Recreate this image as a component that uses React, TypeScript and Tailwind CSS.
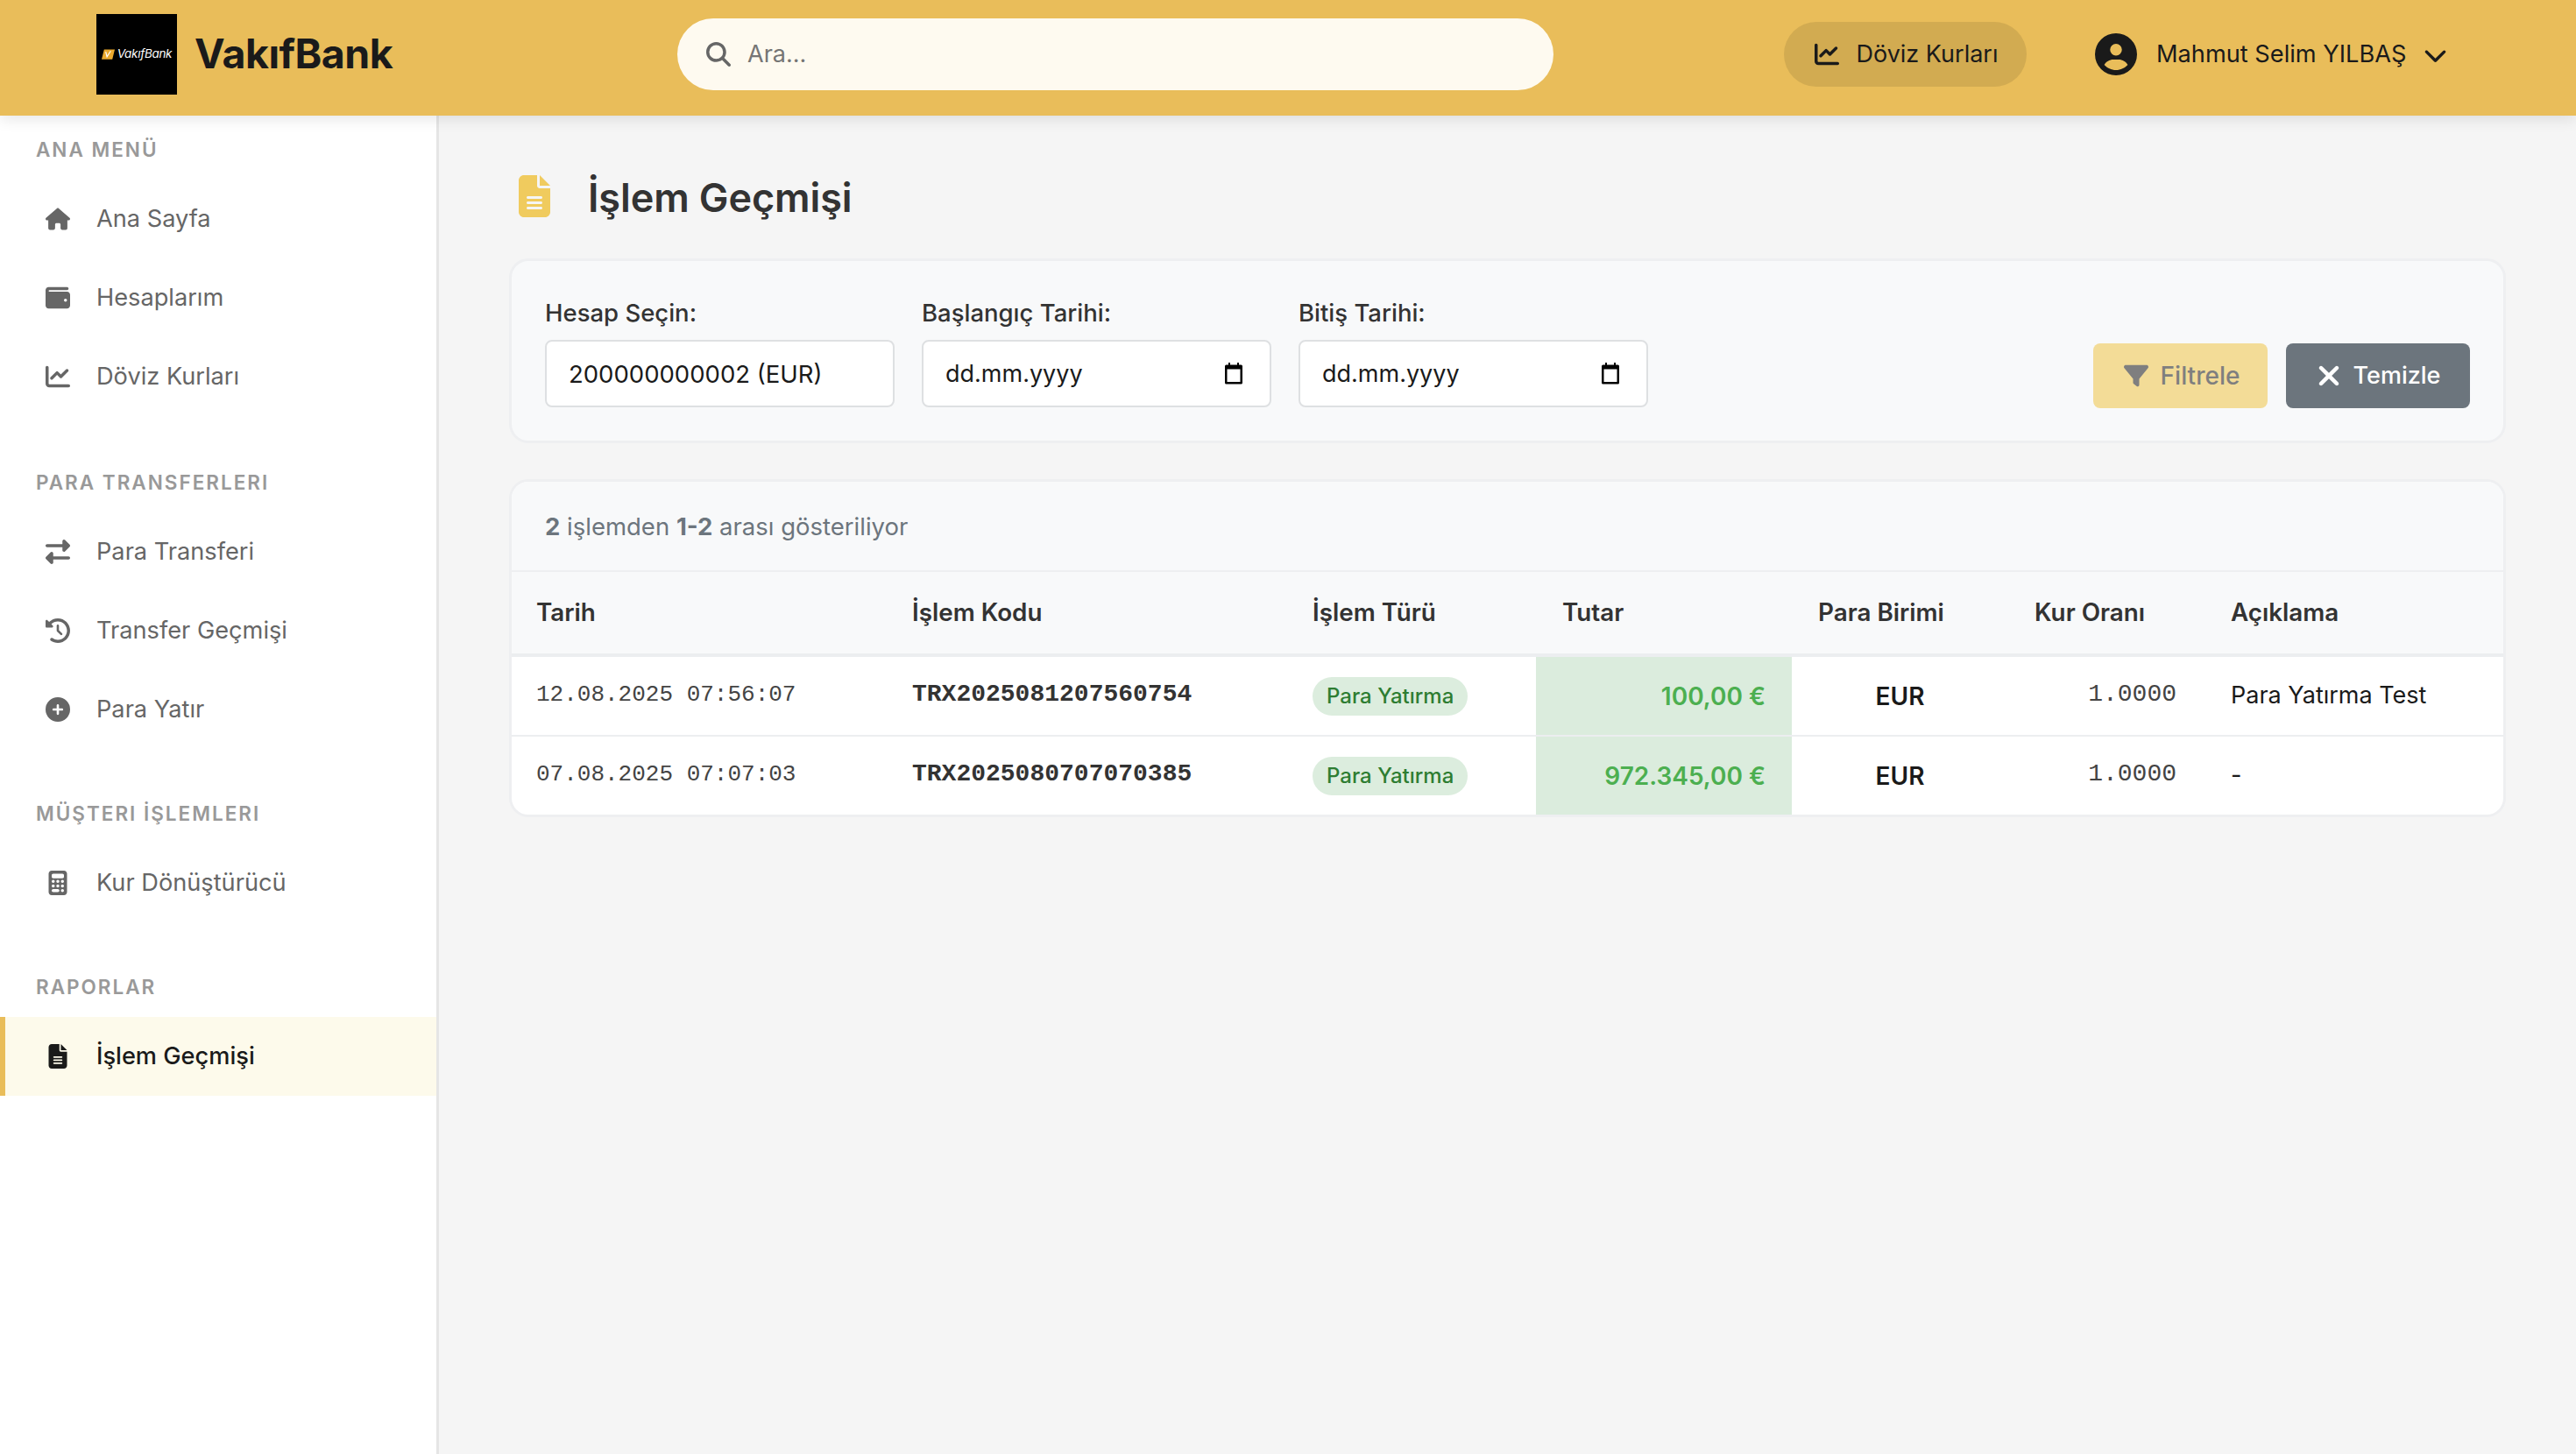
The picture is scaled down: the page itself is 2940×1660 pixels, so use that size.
import type { ReactNode } from 'react'
import {
  FaCalculator,
  FaChartLine,
  FaChevronDown,
  FaCircleUser,
  FaCirclePlus,
  FaClockRotateLeft,
  FaFileLines,
  FaFilter,
  FaHouse,
  FaMagnifyingGlass,
  FaRightLeft,
  FaWallet,
  FaXmark,
} from 'react-icons/fa6'

type MenuItem = { label: string; icon: ReactNode; active?: boolean }
type MenuGroup = { title: string; items: MenuItem[] }

const menu: MenuGroup[] = [
  {
    title: 'ANA MENÜ',
    items: [
      { label: 'Ana Sayfa', icon: <FaHouse /> },
      { label: 'Hesaplarım', icon: <FaWallet /> },
      { label: 'Döviz Kurları', icon: <FaChartLine /> },
    ],
  },
  {
    title: 'PARA TRANSFERLERI',
    items: [
      { label: 'Para Transferi', icon: <FaRightLeft /> },
      { label: 'Transfer Geçmişi', icon: <FaClockRotateLeft /> },
      { label: 'Para Yatır', icon: <FaCirclePlus /> },
    ],
  },
  {
    title: 'MÜŞTERI İŞLEMLERI',
    items: [{ label: 'Kur Dönüştürücü', icon: <FaCalculator /> }],
  },
  {
    title: 'RAPORLAR',
    items: [{ label: 'İşlem Geçmişi', icon: <FaFileLines />, active: true }],
  },
]

const rows = [
  {
    date: '12.08.2025 07:56:07',
    code: 'TRX2025081207560754',
    amount: '100,00 €',
    note: 'Para Yatırma Test',
  },
  {
    date: '07.08.2025 07:07:03',
    code: 'TRX2025080707070385',
    amount: '972.345,00 €',
    note: '-',
  },
]

function CalendarIcon() {
  return (
    <svg viewBox="0 0 22 26" className="h-[26px] w-[22px] shrink-0">
      <path d="M5 0h2v3H5zM15 0h2v3h-2z" fill="#000" />
      <path
        d="M2.5 2.5h17a1.5 1.5 0 0 1 1.5 1.5v19a1.5 1.5 0 0 1-1.5 1.5h-17A1.5 1.5 0 0 1 1 23V4a1.5 1.5 0 0 1 1.5-1.5zM3.500 7.500v14.500h15V7.500z"
        fill="#000"
        fillRule="evenodd"
      />
    </svg>
  )
}

function LogoMark() {
  return (
    <div className="flex h-[92px] w-[92px] shrink-0 items-center justify-center gap-[3px] bg-black">
      <svg viewBox="0 0 16 12" className="h-[12px] w-[15px] shrink-0">
        <path d="M3 0h13l-3 12H0z" fill="#e9a92f" />
        <path d="M5 3l1.500 6L11 2" fill="none" stroke="#fff" strokeWidth="1.300" />
      </svg>
      <span className="text-[13.500px] leading-none tracking-[-0.3px] text-white italic">VakıfBank</span>
    </div>
  )
}

function DateField({ label }: { label: string }) {
  return (
    <div className="w-[399px]">
      <label className="mb-[14px] block text-[27.500px] leading-[34px] font-medium text-[#333333]">{label}</label>
      <div className="flex h-[77px] items-center justify-between rounded-[8px] border-2 border-[#dee0e2] bg-white pr-[30px] pl-[25px] text-[27px] text-[#1a1a1a]">
        <span className="pt-[2px]">dd.mm.yyyy</span>
        <CalendarIcon />
      </div>
    </div>
  )
}

function Sidebar() {
  return (
    <aside className="w-[501px] shrink-0 border-r-[3px] border-[#e5e5e5] bg-white pt-[22px]">
      {menu.map((group) => (
        <div key={group.title} className="mb-[57px] first:mb-[59px]">
          <h3 className="mb-[17px] pl-[41px] text-[22.500px] leading-[34px] font-semibold tracking-[2px] text-[#999999]">
            {group.title}
          </h3>
          {group.items.map((item) => (
            <div
              key={item.label}
              className={
                item.active
                  ? 'flex h-[90px] items-center border-l-[6px] border-[#e9bd5a] bg-[#fdfaeb] pl-[46px] font-medium text-[#1a1a1a]'
                  : 'flex h-[90px] items-center pl-[52px] text-[#666666]'
              }
            >
              <span className="flex w-[28px] justify-center text-[28px]">{item.icon}</span>
              <span className="ml-[30px] text-[27.200px]">{item.label}</span>
            </div>
          ))}
        </div>
      ))}
    </aside>
  )
}

export default function App() {
  return (
    <div className="flex min-h-screen flex-col bg-[#f5f5f5] font-['Inter',sans-serif]">
      <header className="relative z-10 flex h-[132px] shrink-0 items-center bg-[#e9bd5a] pb-[8px] shadow-[0_4px_16px_rgba(0,0,0,0.1)]">
        <div className="flex w-[773px] shrink-0 items-center pl-[110px]">
          <LogoMark />
          <span className="ml-[20px] text-[46.500px] font-bold tracking-[-0.5px] text-[#1a1a1a]">VakıfBank</span>
        </div>
        <div className="flex h-[82px] w-[1000px] items-center rounded-[41px] bg-[#fefaf0] pl-[33px]">
          <FaMagnifyingGlass className="text-[28px] text-[#666666]" />
          <span className="ml-[19px] text-[27px] text-[#757575]">Ara...</span>
        </div>
        <div className="ml-[263px] flex h-[74px] w-[277px] items-center justify-center rounded-[37px] bg-[#d2ab51] text-[#1a1a1a]">
          <FaChartLine className="ml-[2px] text-[28px]" />
          <span className="ml-[20px] text-[27px]">Döviz Kurları</span>
        </div>
        <div className="ml-[78px] flex items-center text-[#1a1a1a]">
          <FaCircleUser className="text-[48px]" />
          <span className="ml-[22px] text-[27.200px]">Mahmut Selim YILBAŞ</span>
          <FaChevronDown className="ml-[20px] text-[27px]" />
        </div>
      </header>

      <div className="flex flex-1">
        <Sidebar />

        <main className="min-w-0 flex-1 pt-[68px] pr-[80px] pl-[80px]">
          <div className="flex h-[48px] items-center">
            <FaFileLines className="ml-[5px] text-[48px] text-[#f0cb5e]" />
            <h1 className="relative top-[2px] ml-[37px] text-[45px] font-semibold tracking-[-0.1px] text-[#333333]">İşlem Geçmişi</h1>
          </div>

          <section className="mt-[47px] flex items-end justify-between rounded-[22px] border-[3px] border-[#eeeff1] bg-[#f8f9fa] pt-[42px] pr-[38px] pb-[37px] pl-[38px]">
            <div className="mb-[1px] flex gap-[31px]">
              <div className="w-[399px]">
                <label className="mb-[14px] block text-[27.500px] leading-[34px] font-medium text-[#333333]">Hesap Seçin:</label>
                <div className="flex h-[77px] items-center rounded-[8px] border-2 border-[#dee0e2] bg-white pl-[25px] text-[27.500px] text-[#1a1a1a]">
                  <span className="pt-[2px]">200000000002 (EUR)</span>
                </div>
              </div>
              <DateField label="Başlangıç Tarihi:" />
              <DateField label="Bitiş Tarihi:" />
            </div>
            <div className="flex gap-[21px]">
              <button
                type="button"
                className="flex h-[74px] w-[199px] items-center justify-center gap-[14px] rounded-[8px] bg-[#f3dc97] pl-[3px] text-[28px] font-medium text-[#7f7f7f]"
              >
                <FaFilter className="text-[28px]" />
                Filtrele
              </button>
              <button
                type="button"
                className="flex h-[74px] w-[210px] items-center justify-center gap-[10px] rounded-[8px] bg-[#6c757d] pr-[3px] text-[27px] font-medium text-white"
              >
                <FaXmark className="text-[36px]" />
                Temizle
              </button>
            </div>
          </section>

          <section className="mt-[41px] overflow-hidden rounded-[22px] border-[3px] border-[#eeeff1] bg-white">
            <div className="flex h-[103px] items-center border-b-2 border-[#eeeff1] bg-[#f8f9fa] pt-[2px] pl-[38px] text-[27.500px] text-[#6c757d]">
              <span>
                <strong className="font-bold">2</strong> işlemden <strong className="font-bold">1-2</strong> arası gösteriliyor
              </span>
            </div>
            <table className="w-full table-fixed border-collapse text-[27px]">
              <thead>
                <tr className="h-[95px] border-b-4 border-[#eceef0] bg-[#f8f9fa] text-left text-[27.800px] text-[#333333]">
                  <th className="w-[427px] pl-[28px] font-semibold">Tarih</th>
                  <th className="w-[457px] pl-[30px] font-semibold">İşlem Kodu</th>
                  <th className="w-[285px] pl-[30px] font-semibold">İşlem Türü</th>
                  <th className="w-[292px] pl-[30px] font-semibold">Tutar</th>
                  <th className="w-[247px] pl-[30px] font-semibold">Para Birimi</th>
                  <th className="w-[224px] pl-[30px] font-semibold">Kur Oranı</th>
                  <th className="pl-[30px] font-semibold">Açıklama</th>
                </tr>
              </thead>
              <tbody>
                {rows.map((row, index) => (
                  <tr key={row.code} className={index === 0 ? 'h-[92px] border-b-2 border-[#eceef0]' : 'h-[90px]'}>
                    <td className="pb-[3px] pl-[28px] font-['Liberation_Mono',monospace] text-[26px] text-[#444444]">{row.date}</td>
                    <td className="pb-[3px] pl-[30px] font-['Liberation_Mono',monospace] text-[28px] font-bold text-[#333333]">{row.code}</td>
                    <td className="pl-[30px]">
                      <span className="inline-flex h-[44px] items-center rounded-[22px] bg-[#dcedde] px-[16px] text-[24px] font-medium text-[#2e7d32]">
                        Para Yatırma
                      </span>
                    </td>
                    <td className="bg-[#dbecdd] pr-[30px] text-right text-[28px] font-semibold text-[#4caf50]">{row.amount}</td>
                    <td className="text-center text-[28px] font-semibold text-[#1a1a1a]">EUR</td>
                    <td className="pr-[32px] pb-[3px] text-right font-['Liberation_Mono',monospace] text-[28px] text-[#444444]">1.0000</td>
                    <td className="pl-[30px] text-[27px] text-[#1a1a1a]">{row.note}</td>
                  </tr>
                ))}
              </tbody>
            </table>
          </section>
        </main>
      </div>
    </div>
  )
}
